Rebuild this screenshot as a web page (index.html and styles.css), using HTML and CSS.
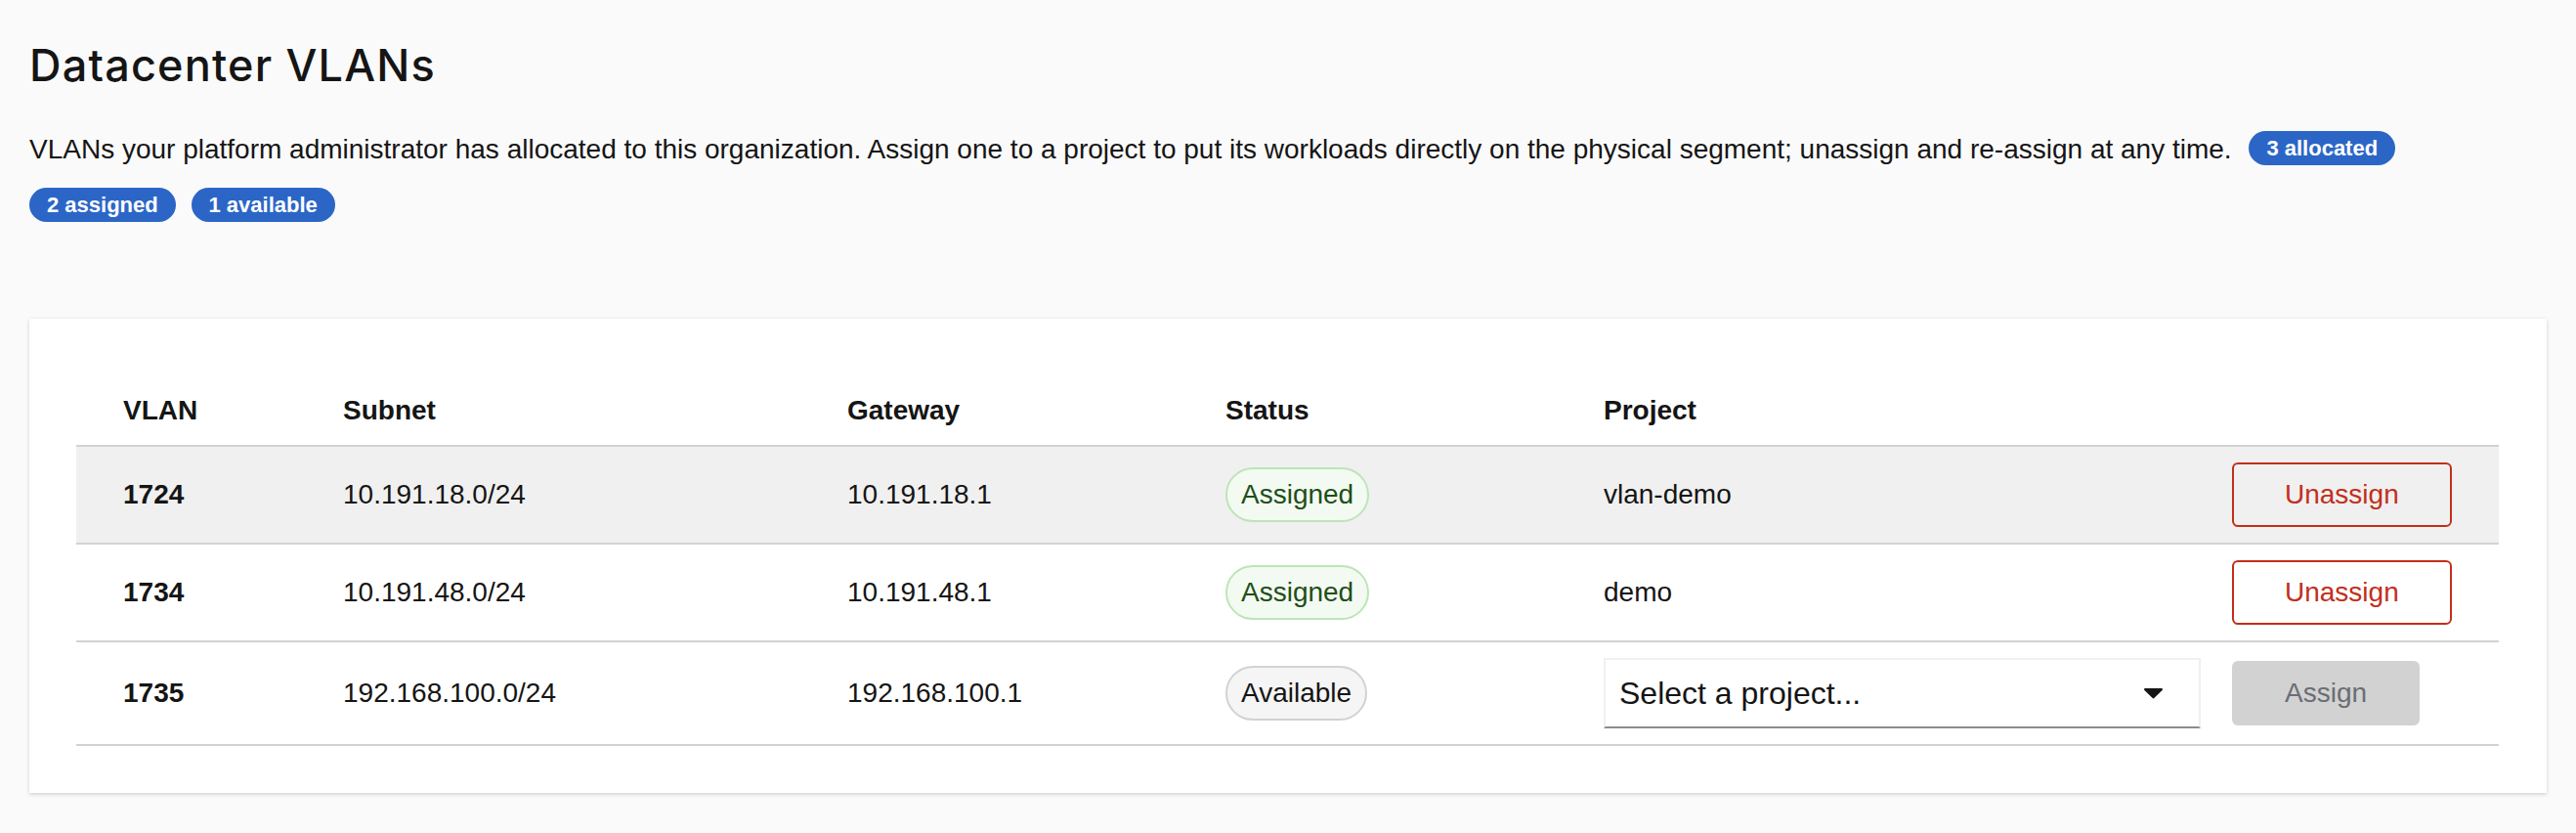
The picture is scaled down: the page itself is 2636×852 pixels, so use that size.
FILE: index.html
```html
<!DOCTYPE html>
<html lang="en">
<head>
    <meta charset="UTF-8">
    <meta name="viewport" content="width=device-width, initial-scale=1.0">
    <title>Datacenter VLANs</title>
    <link rel="stylesheet" href="styles.css">
</head>
<body>
    <h1>Datacenter VLANs</h1>
    <p class="summary">VLANs your platform administrator has allocated to this organization. Assign one to a project to put its workloads directly on the physical segment; unassign and re-assign at any time.
        <span class="badge first">3 allocated</span>
        <span class="badge">2 assigned</span>
        <span class="badge">1 available</span>
    </p>

    <div class="card">
        <table class="vlans">
            <colgroup>
                <col class="col-vlan">
                <col class="col-subnet">
                <col class="col-gateway">
                <col class="col-status">
                <col class="col-project">
                <col>
            </colgroup>
            <thead>
                <tr>
                    <th>VLAN</th>
                    <th>Subnet</th>
                    <th>Gateway</th>
                    <th>Status</th>
                    <th>Project</th>
                    <th></th>
                </tr>
            </thead>
            <tbody>
                <tr class="selected">
                    <td class="vlan-id">1724</td>
                    <td>10.191.18.0/24</td>
                    <td>10.191.18.1</td>
                    <td><span class="label assigned">Assigned</span></td>
                    <td>vlan-demo</td>
                    <td><button class="btn danger">Unassign</button></td>
                </tr>
                <tr>
                    <td class="vlan-id">1734</td>
                    <td>10.191.48.0/24</td>
                    <td>10.191.48.1</td>
                    <td><span class="label assigned">Assigned</span></td>
                    <td>demo</td>
                    <td><button class="btn danger">Unassign</button></td>
                </tr>
                <tr>
                    <td class="vlan-id">1735</td>
                    <td>192.168.100.0/24</td>
                    <td>192.168.100.1</td>
                    <td><span class="label available">Available</span></td>
                    <td>
                        <div class="select">
                            <span>Select a project...</span>
                            <svg width="19" height="11" viewBox="0 0 19 11"><path d="M1.2 0h16.6c1 0 1.5 1.2.8 1.9l-8.3 8.2a1.1 1.1 0 0 1-1.6 0L.4 1.9C-.3 1.2.2 0 1.2 0z" fill="#151515"/></svg>
                        </div>
                    </td>
                    <td><button class="btn primary" disabled>Assign</button></td>
                </tr>
            </tbody>
        </table>
    </div>
</body>
</html>
```

FILE: styles.css
```css
body {
    font-family: "Liberation Sans", Arial, sans-serif;
    font-size: 28px;
    margin: 0;
    padding: 38px 30px;
    background-color: #fafafa;
    color: #151515;
}
h1 {
    font-family: Inter, "Liberation Sans", sans-serif;
    font-size: 45px;
    font-weight: 500;
    letter-spacing: 1.2px;
    line-height: 57px;
    margin: 0;
}
.summary {
    margin: 29px 0 0;
    line-height: 58px;
}
.badge {
    display: inline-block;
    vertical-align: 3px;
    height: 35px;
    line-height: 35px;
    padding: 0 18px;
    margin-right: 8px;
    border-radius: 18px;
    background-color: #2b66c7;
    color: #fff;
    font-size: 22px;
    font-weight: bold;
}
.badge.first {
    margin-left: 10px;
}
.card {
    margin-top: 86px;
    padding: 48px 49px 48px 48px;
    background: #fff;
    box-shadow: 0 2px 4px rgba(3, 3, 3, 0.12), 0 0 4px rgba(3, 3, 3, 0.06);
}
.vlans {
    width: 100%;
    table-layout: fixed;
    border-collapse: separate;
    border-spacing: 0;
}
.col-vlan { width: 257px; }
.col-subnet { width: 516px; }
.col-gateway { width: 387px; }
.col-status { width: 387px; }
.col-project { width: 643px; }
th, td {
    text-align: left;
    line-height: 42px;
    padding: 16px;
    border-bottom: 2px solid #d2d2d2;
    vertical-align: middle;
}
th {
    font-weight: bold;
    padding-top: 25px;
    padding-bottom: 14px;
}
th:first-child, td:first-child {
    padding-left: 48px;
}
th:last-child, td:last-child {
    padding-right: 48px;
}
tr.selected td {
    background-color: #f0f0f0;
}
.vlan-id {
    font-weight: bold;
}
.label {
    display: inline-block;
    line-height: 40px;
    padding: 6px 14px;
    border: 2px solid #d2d2d2;
    border-radius: 30px;
    background: #f5f5f5;
    color: #151515;
}
.label.assigned {
    background: #f3faf2;
    border-color: #bde5b8;
    color: #1e4f18;
}
.btn {
    font: inherit;
    line-height: 42px;
    padding: 10px 52px;
    border: 2px solid transparent;
    border-radius: 6px;
    cursor: pointer;
}
.btn.danger {
    background: transparent;
    border-color: #c22f1c;
    color: #c22f1c;
}
.btn.primary:disabled {
    background: #d2d2d2;
    color: #6a6e73;
    cursor: default;
}
.select {
    display: flex;
    align-items: center;
    justify-content: space-between;
    box-sizing: border-box;
    height: 72px;
    padding: 0 37px 0 14px;
    border: 2px solid #f0f0f0;
    border-bottom-color: #8a8d90;
    background: #fff;
    font-size: 32px;
}
```
